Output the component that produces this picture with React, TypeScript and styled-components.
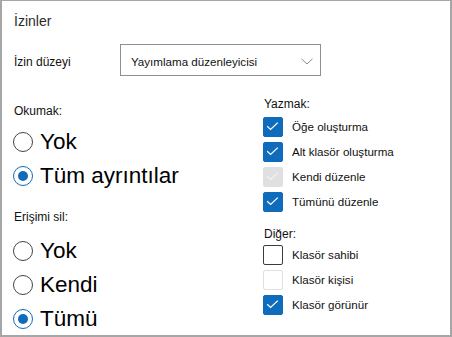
import styled, { createGlobalStyle } from "styled-components"

const GlobalStyle = createGlobalStyle`
  html, body {
    margin: 0;
    padding: 0;
    background: #ffffff;
  }
  body {
    font-family: "Liberation Sans", Arial, sans-serif;
    color: #111111;
  }
`

const Frame = styled.div`
  box-sizing: border-box;
  width: 452px;
  height: 337px;
  border: 2px solid #a6a6a6;
  border-top-width: 1px;
  padding: 0 11px;
  background: #ffffff;
  overflow: hidden;`

const Title = styled.h1`
  margin: 10px 0 0 1px;
  font-size: 14px;
  line-height: 20px;
  font-weight: 400;
  color: #2b2b2b;`

const LevelRow = styled.div`
  display: flex;
  align-items: center;
  margin-top: 13px;
  height: 32px;`

const LevelLabel = styled.span`
  width: 106px;
  margin-left: 1px;
  font-size: 12px;
  padding-top: 3px;`

const Select = styled.div`
  box-sizing: border-box;
  width: 201px;
  height: 32px;
  border: 1px solid #8f8f8f;
  display: flex;
  align-items: center;
  justify-content: space-between;
  padding: 2px 7px 0 10px;
  font-size: 11.6px;
  color: #111;`

const Columns = styled.div`
  display: grid;
  grid-template-columns: 250px 1fr;`

const Column = styled.div<{ $top: number }>`
  display: flex;
  flex-direction: column;
  padding-top: ${p => p.$top}px;`

const GroupLabel = styled.div<{ $gap?: number; $after?: number }>`
  margin-top: ${p => p.$gap ?? 0}px;
  margin-bottom: ${p => p.$after ?? 0}px;
  margin-left: 1px;
  font-size: 12px;
  line-height: 16px;`

const RadioRow = styled.label`
  display: flex;
  align-items: center;
  height: 34px;
  gap: 7px;
  font-size: 22.5px;
  color: #000;`

const RadioCircle = styled.span<{ $on?: boolean }>`
  box-sizing: border-box;
  width: 20px;
  height: 20px;
  border-radius: 50%;
  border: 1px solid ${p => (p.$on ? "#0f6cbd" : "#444")};
  display: flex;
  align-items: center;
  justify-content: center;
  flex-shrink: 0;
  &::after {
    content: "";
    width: 10px;
    height: 10px;
    border-radius: 50%;
    background: ${p => (p.$on ? "#0f6cbd" : "transparent")};
  }`

const CheckRow = styled.label`
  display: flex;
  align-items: center;
  height: 25px;
  gap: 9px;
  font-size: 11.6px;
  color: #111;`

type BoxState = "on" | "off" | "disabledOn" | "disabledOff"

const boxBg: Record<BoxState, string> = {
  on: "#0f6cbd",
  off: "#ffffff",
  disabledOn: "#e0e0e0",
  disabledOff: "#ffffff",
}

const boxBorder: Record<BoxState, string> = {
  on: "#0f6cbd",
  off: "#3b3b3b",
  disabledOn: "#e0e0e0",
  disabledOff: "#e0e0e0",
}

const Box = styled.span<{ $state: BoxState }>`
  box-sizing: border-box;
  width: 20px;
  height: 20px;
  border-radius: 2px;
  border: 1px solid ${p => boxBorder[p.$state]};
  background: ${p => boxBg[p.$state]};
  display: flex;
  flex-shrink: 0;
  svg {
    margin: -1px;
  }`

function Chevron() {
  return (
    <svg width="12" height="7" viewBox="0 0 12 7">
      <path d="M0.5 0.8 L6 6 L11.5 0.8" fill="none" stroke="#8a8a8a" strokeWidth="1" />
    </svg>
  )
}

function Checkbox({ state, label }: { state: BoxState; label: string }) {
  const checked = state === "on" || state === "disabledOn"
  return (
    <CheckRow>
      <Box $state={state}>
        {checked && (
          <svg width="20" height="20" viewBox="0 0 20 20">
            <path
              d="M4.2 9.2 L7.6 12.4 L14.8 5.6"
              fill="none"
              stroke={state === "on" ? "#ffffff" : "#f2f2f2"}
              strokeWidth="1.3"
            />
          </svg>
        )}
      </Box>
      {label}
    </CheckRow>
  )
}

function Radio({ on, label }: { on?: boolean; label: string }) {
  return (
    <RadioRow>
      <RadioCircle $on={on} />
      {label}
    </RadioRow>
  )
}

export default function App() {
  return (
    <>
      <GlobalStyle />
      <Frame>
        <Title>İzinler</Title>
        <LevelRow>
          <LevelLabel>İzin düzeyi</LevelLabel>
          <Select>
            <span>Yayımlama düzenleyicisi</span>
            <Chevron />
          </Select>
        </LevelRow>
        <Columns>
          <Column $top={27}>
            <GroupLabel $after={6}>Okumak:</GroupLabel>
            <Radio label="Yok" />
            <Radio on label="Tüm ayrıntılar" />
            <GroupLabel $gap={16} $after={9}>Erişimi sil:</GroupLabel>
            <Radio label="Yok" />
            <Radio label="Kendi" />
            <Radio on label="Tümü" />
          </Column>
          <Column $top={20}>
            <GroupLabel $after={2}>Yazmak:</GroupLabel>
            <Checkbox state="on" label="Öğe oluşturma" />
            <Checkbox state="on" label="Alt klasör oluşturma" />
            <Checkbox state="disabledOn" label="Kendi düzenle" />
            <Checkbox state="on" label="Tümünü düzenle" />
            <GroupLabel $gap={12} $after={0}>Diğer:</GroupLabel>
            <Checkbox state="off" label="Klasör sahibi" />
            <Checkbox state="disabledOff" label="Klasör kişisi" />
            <Checkbox state="on" label="Klasör görünür" />
          </Column>
        </Columns>
      </Frame>
    </>
  )
}
